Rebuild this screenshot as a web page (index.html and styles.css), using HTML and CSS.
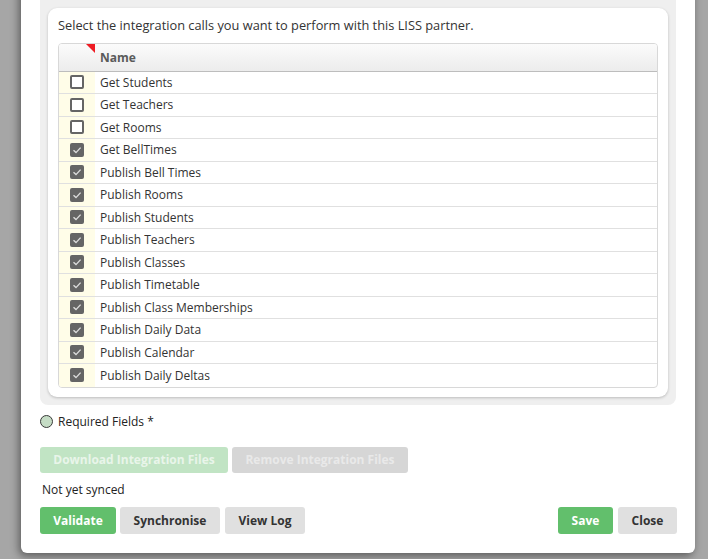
FILE: index.html
```html
<!DOCTYPE html>
<html>
<head>
<meta charset="utf-8">
<link rel="stylesheet" href="styles.css">
</head>
<body>
<div class="overlay">
  <div class="modal">
    <div class="panel">
      <div class="card">
        <p class="intro">Select the integration calls you want to perform with this LISS partner.</p>
        <div class="grid">
          <div class="row head">
            <div class="cb-cell"><span class="flag"></span></div>
            <div class="name">Name</div>
          </div>
          <div class="row"><div class="cb-cell"><span class="cb"></span></div><div class="name">Get Students</div></div>
          <div class="row"><div class="cb-cell"><span class="cb"></span></div><div class="name">Get Teachers</div></div>
          <div class="row"><div class="cb-cell"><span class="cb"></span></div><div class="name">Get Rooms</div></div>
          <div class="row"><div class="cb-cell"><span class="cb on"><svg viewBox="0 0 14 14"><path d="M3.5 7.2 L6 9.6 L10.6 4.6" /></svg></span></div><div class="name">Get BellTimes</div></div>
          <div class="row"><div class="cb-cell"><span class="cb on"><svg viewBox="0 0 14 14"><path d="M3.5 7.2 L6 9.6 L10.6 4.6" /></svg></span></div><div class="name">Publish Bell Times</div></div>
          <div class="row"><div class="cb-cell"><span class="cb on"><svg viewBox="0 0 14 14"><path d="M3.5 7.2 L6 9.6 L10.6 4.6" /></svg></span></div><div class="name">Publish Rooms</div></div>
          <div class="row"><div class="cb-cell"><span class="cb on"><svg viewBox="0 0 14 14"><path d="M3.5 7.2 L6 9.6 L10.6 4.6" /></svg></span></div><div class="name">Publish Students</div></div>
          <div class="row"><div class="cb-cell"><span class="cb on"><svg viewBox="0 0 14 14"><path d="M3.5 7.2 L6 9.6 L10.6 4.6" /></svg></span></div><div class="name">Publish Teachers</div></div>
          <div class="row"><div class="cb-cell"><span class="cb on"><svg viewBox="0 0 14 14"><path d="M3.5 7.2 L6 9.6 L10.6 4.6" /></svg></span></div><div class="name">Publish Classes</div></div>
          <div class="row"><div class="cb-cell"><span class="cb on"><svg viewBox="0 0 14 14"><path d="M3.5 7.2 L6 9.6 L10.6 4.6" /></svg></span></div><div class="name">Publish Timetable</div></div>
          <div class="row"><div class="cb-cell"><span class="cb on"><svg viewBox="0 0 14 14"><path d="M3.5 7.2 L6 9.6 L10.6 4.6" /></svg></span></div><div class="name">Publish Class Memberships</div></div>
          <div class="row"><div class="cb-cell"><span class="cb on"><svg viewBox="0 0 14 14"><path d="M3.5 7.2 L6 9.6 L10.6 4.6" /></svg></span></div><div class="name">Publish Daily Data</div></div>
          <div class="row"><div class="cb-cell"><span class="cb on"><svg viewBox="0 0 14 14"><path d="M3.5 7.2 L6 9.6 L10.6 4.6" /></svg></span></div><div class="name">Publish Calendar</div></div>
          <div class="row last"><div class="cb-cell"><span class="cb on"><svg viewBox="0 0 14 14"><path d="M3.5 7.2 L6 9.6 L10.6 4.6" /></svg></span></div><div class="name">Publish Daily Deltas</div></div>
        </div>
      </div>
    </div>
    <div class="required"><span class="dot"></span>Required Fields *</div>
    <div class="btn-row files">
      <button class="btn green disabled">Download Integration Files</button>
      <button class="btn grey disabled">Remove Integration Files</button>
    </div>
    <div class="status">Not yet synced</div>
    <div class="btn-row actions">
      <button class="btn green">Validate</button>
      <button class="btn grey">Synchronise</button>
      <button class="btn grey">View Log</button>
      <span class="spacer"></span>
      <button class="btn green">Save</button>
      <button class="btn grey">Close</button>
    </div>
  </div>
</div>
</body>
</html>
```

FILE: styles.css
```css
* { box-sizing: border-box; }
html, body { margin: 0; padding: 0; }
body {
  width: 708px;
  height: 559px;
  overflow: hidden;
  background: #a6a6a6;
  font-family: "Open Sans", "Noto Sans", sans-serif;
  color: #333;
}
.overlay {
  padding-left: 21px;
  width: 708px;
}
.modal {
  width: 674px;
  margin-top: -20px;
  background: #fff;
  border-radius: 0 0 6px 6px;
  box-shadow: -2px 3px 8px rgba(0,0,0,0.45);
  padding: 0 19px 19px 19px;
}
.panel {
  background: #efefef;
  border-radius: 0 0 8px 8px;
  padding: 28px 8px 8px 8px;
}
.card {
  background: #fff;
  border-radius: 9px;
  box-shadow: 0 1px 3px rgba(0,0,0,0.22);
  padding: 9px 10px 9px 10px;
}
.intro {
  margin: 0 0 9px 0;
  font-size: 12.8px;
  line-height: 17px;
  color: #333;
}
.grid {
  border: 1px solid #d8d8d8;
  border-radius: 4px;
  overflow: hidden;
}
.row {
  display: flex;
  height: 22.5px;
  border-bottom: 1px solid #e0e0e0;
}
.row.last { border-bottom: none; }
.row.head {
  height: 27.5px;
  background: linear-gradient(#fbfbfb, #ececec);
  border-bottom: 1px solid #bdbdbd;
}
.cb-cell {
  width: 36px;
  flex: none;
  background: #fffde8;
  display: flex;
  align-items: center;
  justify-content: center;
  position: relative;
}
.row.head .cb-cell { background: transparent; }
.flag {
  position: absolute;
  top: 0;
  right: 0;
  width: 0;
  height: 0;
  border-top: 9px solid #ee1c24;
  border-left: 9px solid transparent;
}
.name {
  flex: 1;
  padding-left: 5px;
  font-size: 12px;
  display: flex;
  align-items: center;
  color: #333;
}
.row.head .name {
  font-weight: bold;
  color: #5a5a5a;
  padding-top: 1px;
}
.cb {
  width: 14px;
  height: 14px;
  border: 2px solid #656565;
  border-radius: 2px;
  background: #fff;
  display: block;
}
.cb.on {
  background: #656565;
  border: none;
}
.cb svg {
  width: 14px;
  height: 14px;
  display: block;
}
.cb path {
  fill: none;
  stroke: #dcdcdc;
  stroke-width: 1.4;
}
.required {
  display: flex;
  align-items: center;
  margin-top: 9px;
  font-size: 12px;
  color: #222;
  height: 16px;
}
.dot {
  width: 13px;
  height: 13px;
  border-radius: 50%;
  background: #c5dcc5;
  border: 1px solid #3a3a3a;
  margin-right: 5px;
}
.btn-row {
  display: flex;
  gap: 4px;
}
.files { margin-top: 17px; }
.btn {
  height: 26px;
  border: none;
  border-radius: 3px;
  font-family: "Open Sans", "Noto Sans", sans-serif;
  font-weight: bold;
  font-size: 12px;
  padding: 0 13px;
  cursor: pointer;
}
.btn.green { background: #62bf6c; color: #fff; }
.btn.grey { background: #e0e0e0; color: #333; }
.files .btn.green { background: #c1e4c4; color: #e9f5ea; width: 188px; }
.files .btn.grey { background: #d6d6d6; color: #e9e9e9; width: 176px; }
.status {
  margin-top: 8px;
  margin-left: 2px;
  font-size: 12px;
  color: #222;
  height: 17px;
  line-height: 17px;
}
.actions { margin-top: 9px; margin-right: -1px; }
.actions .btn { height: 27px; }
.actions .btn:nth-child(1) { width: 76px; }
.actions .btn:nth-child(2) { width: 100px; }
.actions .btn:nth-child(3) { width: 80px; margin-left: 1px; }
.actions .btn:nth-child(5) { width: 55px; margin-right: 1px; }
.actions .btn:nth-child(6) { width: 59px; }
.spacer { flex: 1; }
```
